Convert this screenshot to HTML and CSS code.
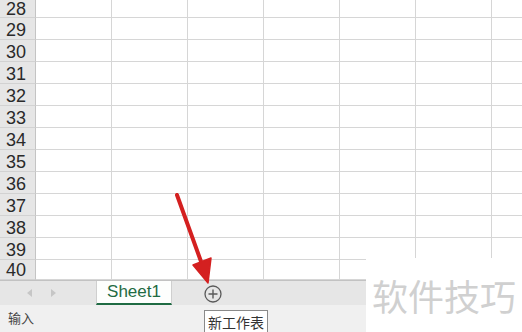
FILE: index.html
```html
<!DOCTYPE html>
<html lang="zh">
<head>
  <meta charset="UTF-8" />
  <title>Sheet1</title>
  <link rel="stylesheet" href="styles.css">
</head>
<body>

  <div class="sheet">
    <div class="row row-top"><div class="rh">28</div><div class="c"></div><div class="c"></div><div class="c"></div><div class="c"></div><div class="c"></div><div class="c"></div><div class="c"></div></div>
    <div class="row"><div class="rh">29</div><div class="c"></div><div class="c"></div><div class="c"></div><div class="c"></div><div class="c"></div><div class="c"></div><div class="c"></div></div>
    <div class="row"><div class="rh">30</div><div class="c"></div><div class="c"></div><div class="c"></div><div class="c"></div><div class="c"></div><div class="c"></div><div class="c"></div></div>
    <div class="row"><div class="rh">31</div><div class="c"></div><div class="c"></div><div class="c"></div><div class="c"></div><div class="c"></div><div class="c"></div><div class="c"></div></div>
    <div class="row"><div class="rh">32</div><div class="c"></div><div class="c"></div><div class="c"></div><div class="c"></div><div class="c"></div><div class="c"></div><div class="c"></div></div>
    <div class="row"><div class="rh">33</div><div class="c"></div><div class="c"></div><div class="c"></div><div class="c"></div><div class="c"></div><div class="c"></div><div class="c"></div></div>
    <div class="row"><div class="rh">34</div><div class="c"></div><div class="c"></div><div class="c"></div><div class="c"></div><div class="c"></div><div class="c"></div><div class="c"></div></div>
    <div class="row"><div class="rh">35</div><div class="c"></div><div class="c"></div><div class="c"></div><div class="c"></div><div class="c"></div><div class="c"></div><div class="c"></div></div>
    <div class="row"><div class="rh">36</div><div class="c"></div><div class="c"></div><div class="c"></div><div class="c"></div><div class="c"></div><div class="c"></div><div class="c"></div></div>
    <div class="row"><div class="rh">37</div><div class="c"></div><div class="c"></div><div class="c"></div><div class="c"></div><div class="c"></div><div class="c"></div><div class="c"></div></div>
    <div class="row"><div class="rh">38</div><div class="c"></div><div class="c"></div><div class="c"></div><div class="c"></div><div class="c"></div><div class="c"></div><div class="c"></div></div>
    <div class="row"><div class="rh">39</div><div class="c"></div><div class="c"></div><div class="c"></div><div class="c"></div><div class="c"></div><div class="c"></div><div class="c"></div></div>
    <div class="row row-last"><div class="rh">40</div><div class="c"></div><div class="c"></div><div class="c"></div><div class="c"></div><div class="c"></div><div class="c"></div><div class="c"></div></div>
  </div>

  <div class="tabbar">
    <div class="nav">
      <span class="tri tri-left"></span>
      <span class="tri tri-right"></span>
    </div>
    <div class="tab">Sheet1</div>
    <div class="add">
      <svg width="18" height="18" viewBox="0 0 18 18">
        <circle cx="9" cy="9" r="8" fill="none" stroke="#5a5a5a" stroke-width="1.3"/>
        <path d="M9 4.5v9M4.5 9h9" stroke="#5a5a5a" stroke-width="1.4"/>
      </svg>
    </div>
  </div>

  <div class="statusbar">输入</div>

  <div class="tooltip">新工作表</div>

  <svg class="arrow" width="60" height="100" viewBox="0 0 60 100">
    <path d="M4 2 L 30 74" stroke="#d42020" stroke-width="4" stroke-linecap="round"/>
    <path d="M20 72 L 38 65 L 35 90 Z" fill="#d42020" stroke="#d42020" stroke-width="1.5" stroke-linejoin="round"/>
  </svg>

  <div class="watermark">软件技巧</div>

</body>
</html>
```

FILE: styles.css
```css
body {
  margin: 0;
  width: 522px;
  height: 332px;
  overflow: hidden;
  position: relative;
  background: #fff;
  font-family: "Liberation Sans", "Noto Sans CJK SC", sans-serif;
}
.sheet {
  height: 280px;
  overflow: hidden;
}
.row {
  display: flex;
  height: 22px;
}
.row-top {
  height: 18px;
}
.row-last {
  height: 20px;
}
.rh {
  width: 36px;
  flex: none;
  padding: 3px 0 0 6px;
  background: #e6e6e6;
  border-right: 1px solid #c4c4c4;
  border-bottom: 1px solid #d2d2d2;
  box-sizing: border-box;
  font-size: 18px;
  line-height: 18px;
  color: #2a2a2a;
}
.row-top .rh {
  padding-top: 0;
}
.row-last .rh {
  padding-top: 1px;
}
.c {
  width: 76px;
  flex: none;
  border-right: 1px solid #d6d6d6;
  border-bottom: 1px solid #d6d6d6;
  box-sizing: border-box;
}
.tabbar {
  height: 24px;
  background: #e6e6e6;
  border-top: 1px solid #c2c2c2;
  display: flex;
  align-items: stretch;
}
.nav {
  width: 96px;
  display: flex;
  align-items: center;
  gap: 19px;
  padding-left: 27px;
  box-sizing: border-box;
}
.tri {
  width: 0;
  height: 0;
  border-top: 4px solid transparent;
  border-bottom: 4px solid transparent;
}
.tri-left {
  border-right: 5px solid #c6c6c6;
}
.tri-right {
  border-left: 5px solid #c6c6c6;
}
.tab {
  width: 76px;
  background: #fdfefd;
  border-left: 1px solid #cfcfcf;
  border-right: 1px solid #cfcfcf;
  border-bottom: 2px solid #1f6b43;
  box-sizing: border-box;
  text-align: center;
  font-size: 17px;
  line-height: 21px;
  color: #1f6b43;
}
.add {
  margin-left: 32px;
  display: flex;
  align-items: center;
  padding-top: 2px;
}
.statusbar {
  height: 27px;
  background: #f0f0f0;
  padding-left: 8px;
  font-size: 13px;
  line-height: 26px;
  color: #444;
  font-family: "Noto Sans CJK SC", sans-serif;
}
.tooltip {
  position: absolute;
  left: 204px;
  top: 310px;
  padding: 1px 3px;
  background: #fff;
  border: 1px solid #8a8a8a;
  font-family: "Noto Sans CJK SC", sans-serif;
  font-size: 14px;
  line-height: 20px;
  color: #333;
}
.arrow {
  position: absolute;
  left: 173px;
  top: 193px;
}
.watermark {
  position: absolute;
  left: 366px;
  top: 258px;
  right: 0;
  bottom: 0;
  background: #fff;
  padding-left: 6px;
  padding-top: 15px;
  font-family: "Noto Sans CJK SC", sans-serif;
  font-size: 36px;
  line-height: 44px;
  color: #d0d0d0;
}
```
